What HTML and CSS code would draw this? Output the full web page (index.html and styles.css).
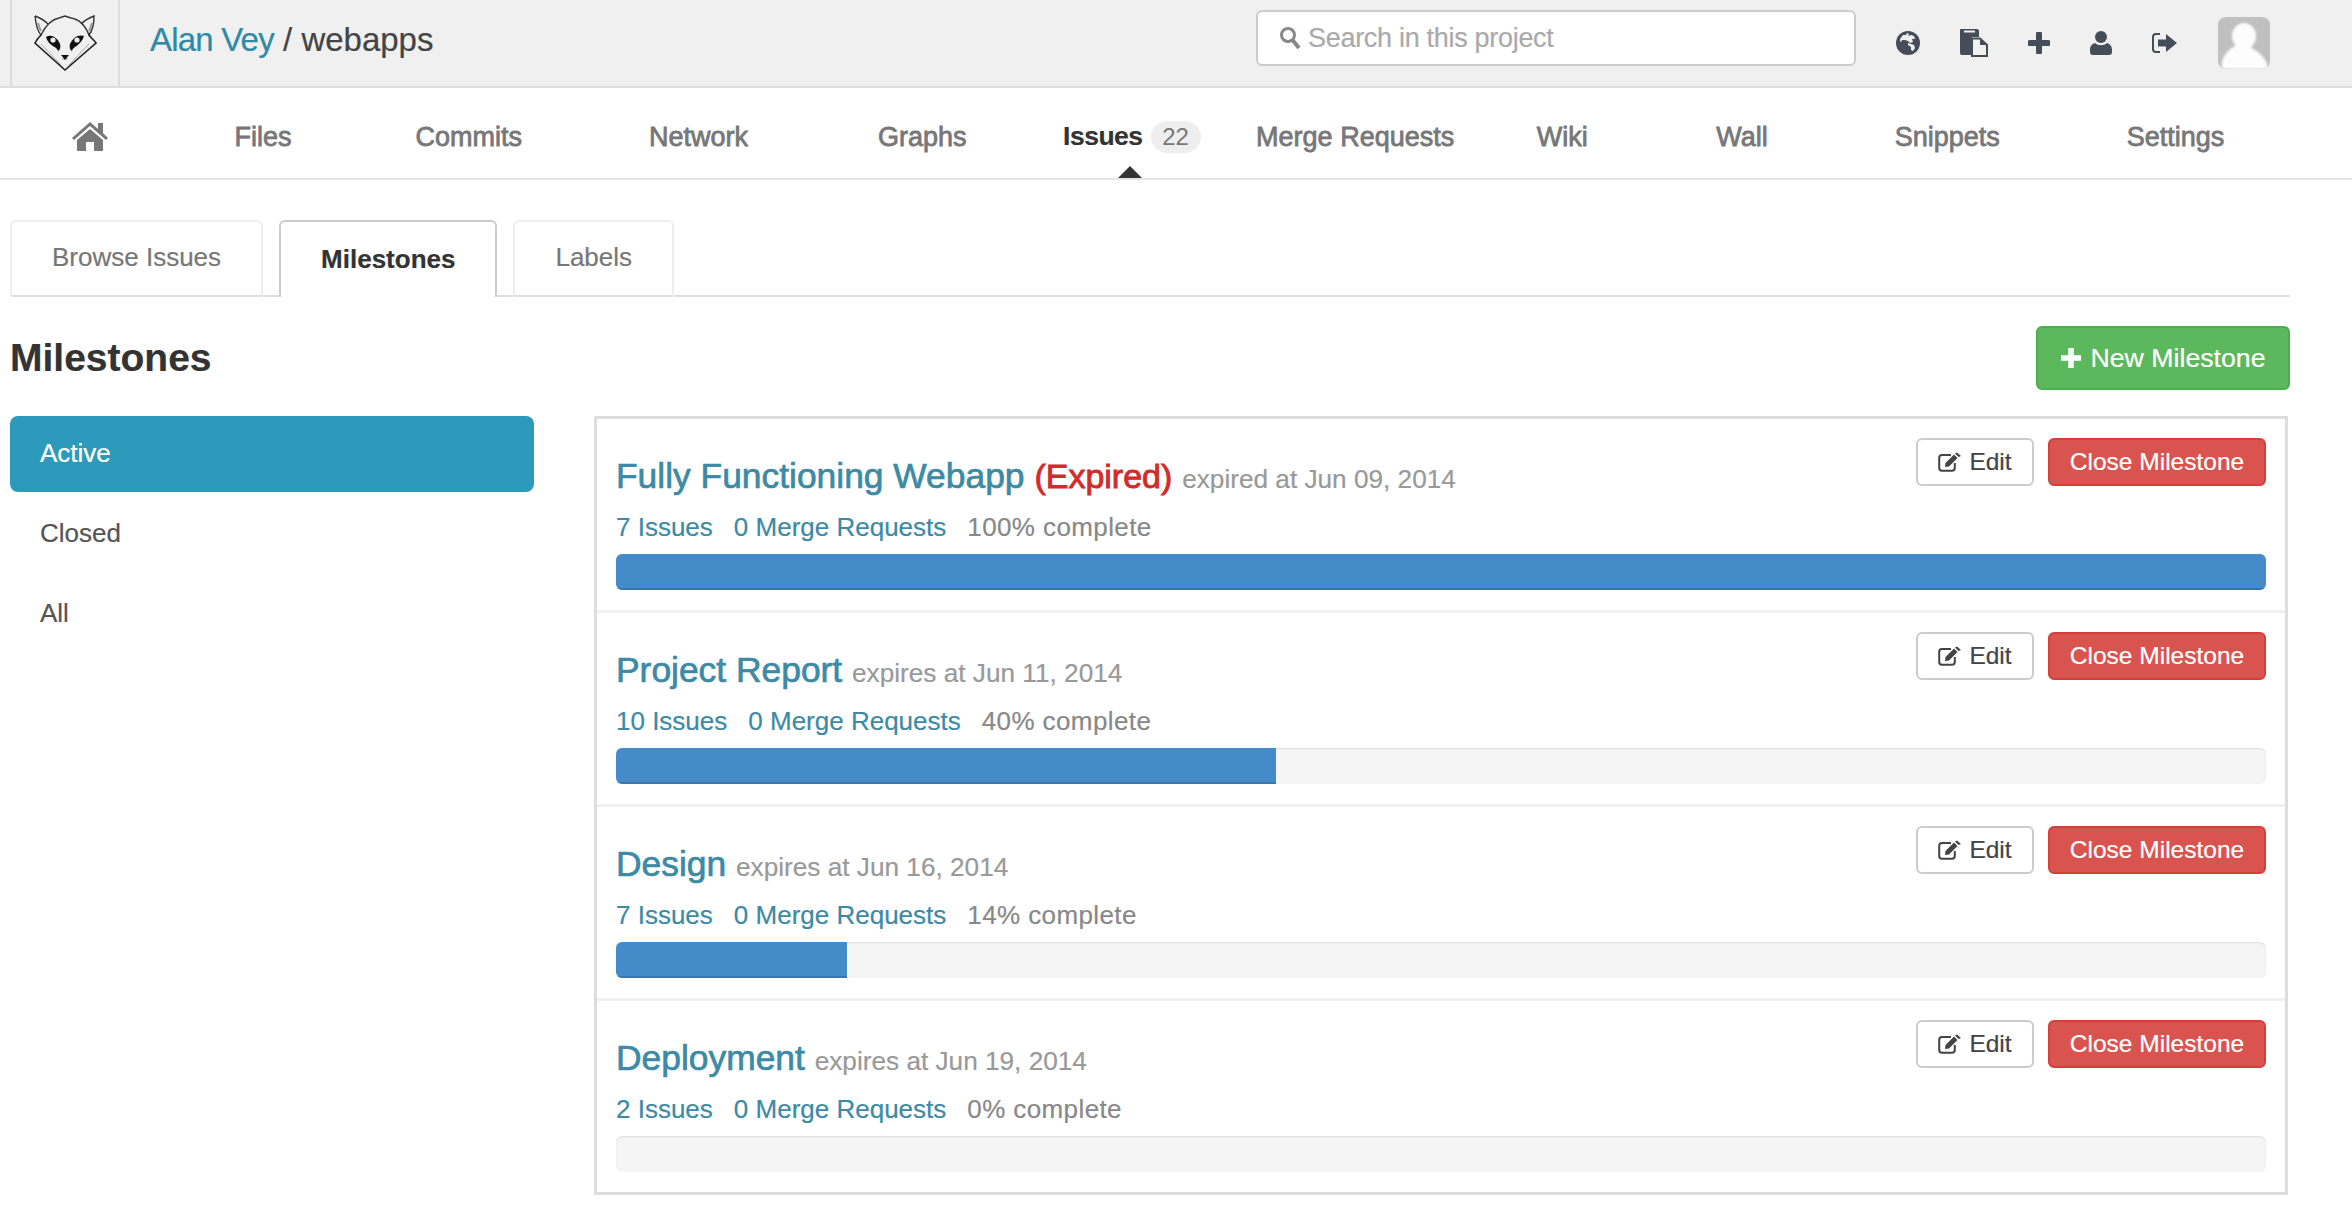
FILE: index.html
```html
<!DOCTYPE html>
<html lang="en">
<head>
    <meta charset="UTF-8">
    <title>Milestones - webapps</title>
    <link rel="stylesheet" href="styles.css">
</head>
<body>

<header class="topbar">
    <a class="logo" href="#">
        <svg width="64" height="60" viewBox="0 0 64 60">
            <path d="M2 3 C3 12 4 18 8 22 C13 12 20 6 26 5 L32 3 L38 5 C45 6 52 12 56 22 C60 17 61 10 61 3 C56 5 51 8 48 11 M2 3 C8 5 12 8 15 11" fill="none" stroke="#333" stroke-width="1.4"/>
            <path d="M8 22 C5 25 3 28 2 30 L32 57 L63 30 C61 27 58 25 56 22" fill="none" stroke="#222" stroke-width="1.6"/>
            <path d="M5 10 C6 14 7 16 8 18 M59 10 C58 14 57 16 56 18" fill="none" stroke="#999" stroke-width="2"/>
            <path d="M8 31 L28 52 M56 31 L36 52 M29 46 L35 46" fill="none" stroke="#aaa" stroke-width="1"/>
            <path d="M13 24 C18 21 24 24 27 31 C28 34 27 37 25 38 C24 33 16 34 13 24 Z" fill="#111"/>
            <path d="M51 23 C46 21 40 24 37 31 C36 34 37 37 39 38 C40 33 48 33 51 23 Z" fill="#111"/>
            <circle cx="20" cy="27" r="2.6" fill="#eee"/>
            <circle cx="44" cy="27" r="2.6" fill="#eee"/>
            <path d="M28 42 L36 42 L32 47 Z" fill="#111"/>
        </svg>
    </a>
    <div class="project-title"><a href="#">Alan Vey</a> / webapps</div>
    <div class="search">
        <svg class="search-icon" width="22" height="24" viewBox="0 0 22 24">
            <circle cx="9" cy="9" r="6.5" fill="none" stroke="#888" stroke-width="3"/>
            <path d="M13.5 14 L20 22" stroke="#888" stroke-width="4"/>
        </svg>
        <input class="search-input" type="text" placeholder="Search in this project">
    </div>
    <div class="top-icons">
        <svg class="icon-globe" width="24" height="24" viewBox="0 0 24 24">
            <circle cx="12" cy="12" r="12" fill="#454d58"/>
            <path d="M4 8 L7 4 L10 4 L11 2 L13 3 L12 5 L15 4 L18 5 L19 8 L16 8 L17 11 L14 12 L12 10 L9 9 L6 9 L5 11 L4 10 Z" fill="#f0f0f0"/>
            <path d="M12 12 L15 13 L18 14 L19 17 L17 20 L15 19 L15 16 L12 14 Z" fill="#f0f0f0"/>
        </svg>
        <svg class="icon-files" width="28" height="28" viewBox="0 0 28 28">
            <path d="M1 0 H17 Q19 0 19 2 V8 H13 Q11 8 11 10 V26 H2 Q0 26 0 24 V1 Q0 0 1 0 Z" fill="#454d58"/>
            <rect x="4" y="1.5" width="11" height="2" fill="#f0f0f0"/>
            <path d="M12 9.5 H20 L27 16 V27 H12 Z" fill="#f0f0f0" stroke="#454d58" stroke-width="2"/>
            <path d="M20 9 V16 H27 Z" fill="#454d58"/>
        </svg>
        <svg class="icon-plus" width="22" height="22" viewBox="0 0 22 22">
            <path d="M11 2 V20 M2 11 H20" stroke="#454d58" stroke-width="6" stroke-linecap="round"/>
        </svg>
        <svg class="icon-user" width="22" height="24" viewBox="0 0 22 24">
            <circle cx="11" cy="6" r="6" fill="#454d58"/>
            <path d="M5 12 C8 15 14 15 17 12 C20 13 22 15 22 19 V21 Q22 24 19 24 H3 Q0 24 0 21 V19 C0 15 2 13 5 12 Z" fill="#454d58"/>
        </svg>
        <svg class="icon-signout" width="25" height="20" viewBox="0 0 25 20">
            <path d="M8 1 H4 Q1 1 1 4 V16 Q1 19 4 19 H8" fill="none" stroke="#454d58" stroke-width="2"/>
            <path d="M6 6.5 H14 V1 L25 10 L14 19 V13.5 H6 Z" fill="#454d58"/>
        </svg>
        <div class="avatar">
            <svg width="52" height="52" viewBox="0 0 52 52">
                <defs><filter id="soft"><feGaussianBlur stdDeviation="0.8"/></filter></defs>
                <g fill="#fdfdfd" filter="url(#soft)">
                    <ellipse cx="26" cy="19" rx="12" ry="13"/>
                    <path d="M20 28 H32 C36 34 49 36 51 52 H7 C3 52 3 36 20 28 Z" transform="translate(-1 0)"/>
                </g>
            </svg>
        </div>
    </div>
</header>

<nav class="mainnav">
    <a class="nav-item nav-home" href="#">
        <svg width="36" height="30" viewBox="0 0 36 30">
            <path d="M18 1 L26 8 V2 H31 V12 L36 17 L34 19 L18 5 L2 19 L0 17 Z" fill="#777"/>
            <path d="M18 8 L31 19 V30 H22 V21 H14 V30 H5 V19 Z" fill="#777"/>
        </svg>
    </a>
    <a class="nav-item nav-files" href="#">Files</a>
    <a class="nav-item" href="#">Commits</a>
    <a class="nav-item" href="#">Network</a>
    <a class="nav-item nav-graphs" href="#">Graphs</a>
    <a class="nav-item nav-issues active" href="#">Issues<span class="badge">22</span></a>
    <a class="nav-item nav-merge" href="#">Merge Requests</a>
    <a class="nav-item nav-wiki" href="#">Wiki</a>
    <a class="nav-item" href="#">Wall</a>
    <a class="nav-item" href="#">Snippets</a>
    <a class="nav-item" href="#">Settings</a>
</nav>

<div class="container">
    <ul class="tabs">
        <li class="tab"><a href="#">Browse Issues</a></li>
        <li class="tab active"><a href="#">Milestones</a></li>
        <li class="tab"><a href="#">Labels</a></li>
    </ul>

    <div class="page-head">
        <h3 class="page-title">Milestones</h3>
        <a class="btn btn-new" href="#">
            <svg width="22" height="22" viewBox="0 0 22 22"><path d="M11 1 V21 M1 11 H21" stroke="#fff" stroke-width="5.5"/></svg>
            New Milestone
        </a>
    </div>

    <div class="columns">
        <ul class="side-nav">
            <li class="side-item active"><a href="#">Active</a></li>
            <li class="side-item"><a href="#">Closed</a></li>
            <li class="side-item"><a href="#">All</a></li>
        </ul>

        <div class="milestones">
            <div class="milestone">
                <div class="milestone-actions">
                    <a class="btn btn-edit" href="#"><svg width="24" height="20" viewBox="0 0 24 20"><use href="#edit-icon"/></svg>Edit</a>
                    <a class="btn btn-close" href="#">Close Milestone</a>
                </div>
                <h4 class="milestone-title"><a href="#">Fully Functioning Webapp</a> <span class="expired">(Expired)</span> <small>expired at Jun 09, 2014</small></h4>
                <p class="milestone-meta"><a href="#">7 Issues</a><a href="#">0 Merge Requests</a><span>100% complete</span></p>
                <div class="progress"><div class="progress-bar" style="width: 100%"></div></div>
            </div>
            <div class="milestone">
                <div class="milestone-actions">
                    <a class="btn btn-edit" href="#"><svg width="24" height="20" viewBox="0 0 24 20"><use href="#edit-icon"/></svg>Edit</a>
                    <a class="btn btn-close" href="#">Close Milestone</a>
                </div>
                <h4 class="milestone-title"><a href="#">Project Report</a> <small>expires at Jun 11, 2014</small></h4>
                <p class="milestone-meta"><a href="#">10 Issues</a><a href="#">0 Merge Requests</a><span>40% complete</span></p>
                <div class="progress"><div class="progress-bar" style="width: 40%"></div></div>
            </div>
            <div class="milestone">
                <div class="milestone-actions">
                    <a class="btn btn-edit" href="#"><svg width="24" height="20" viewBox="0 0 24 20"><use href="#edit-icon"/></svg>Edit</a>
                    <a class="btn btn-close" href="#">Close Milestone</a>
                </div>
                <h4 class="milestone-title"><a href="#">Design</a> <small>expires at Jun 16, 2014</small></h4>
                <p class="milestone-meta"><a href="#">7 Issues</a><a href="#">0 Merge Requests</a><span>14% complete</span></p>
                <div class="progress"><div class="progress-bar" style="width: 14%"></div></div>
            </div>
            <div class="milestone">
                <div class="milestone-actions">
                    <a class="btn btn-edit" href="#"><svg width="24" height="20" viewBox="0 0 24 20"><use href="#edit-icon"/></svg>Edit</a>
                    <a class="btn btn-close" href="#">Close Milestone</a>
                </div>
                <h4 class="milestone-title"><a href="#">Deployment</a> <small>expires at Jun 19, 2014</small></h4>
                <p class="milestone-meta"><a href="#">2 Issues</a><a href="#">0 Merge Requests</a><span>0% complete</span></p>
                <div class="progress"></div>
            </div>
        </div>
    </div>
</div>

<svg class="sprites" width="0" height="0">
    <symbol id="edit-icon" viewBox="0 0 24 20">
        <path d="M13 3 H4 Q1.2 3 1.2 6 V16 Q1.2 18.8 4 18.8 H14 Q16.8 18.8 16.8 16 V11" fill="none" stroke="#444" stroke-width="2"/>
        <path d="M7 15 L7.5 11 L16 2.5 L19.5 6 L11 14.5 Z M17 1.5 L19 0.5 L23 4 L20.5 5 Z" fill="#444"/>
    </symbol>
</svg>

</body>
</html>
```

FILE: styles.css
```css
body {
    font-family: "Liberation Sans", Arial, sans-serif;
    font-size: 26px;
    color: #333;
    background-color: #fff;
    -webkit-text-stroke-width: 0.2px;
    margin: 0;
    padding: 0;
}
a {
    text-decoration: none;
    color: #3c8aa6;
}

/* top bar */
.topbar {
    display: flex;
    align-items: center;
    height: 86px;
    background-color: #f0f0f0;
    border-bottom: 2px solid #dedede;
    padding-left: 10px;
}
.logo {
    display: flex;
    align-items: center;
    justify-content: center;
    box-sizing: border-box;
    width: 110px;
    height: 86px;
    border-left: 2px solid #ddd;
    border-right: 2px solid #ddd;
}
.project-title {
    margin-left: 30px;
    margin-top: -6px;
    font-size: 33px;
    color: #444;
}
.project-title a {
    letter-spacing: -0.8px;
    color: #2f8aa8;
}
.search {
    display: flex;
    align-items: center;
    box-sizing: border-box;
    width: 600px;
    height: 56px;
    margin-left: auto;
    margin-top: -10px;
    padding-left: 21px;
    background-color: #fff;
    border: 2px solid #ccc;
    border-radius: 6px;
}
.search-input {
    flex: 1;
    border: none;
    outline: none;
    padding: 0;
    margin-left: 7px;
    font-family: inherit;
    font-size: 27px;
    letter-spacing: -0.3px;
    background: none;
}
.search-input::placeholder {
    color: #aaa;
    opacity: 1;
}
.top-icons {
    display: flex;
    align-items: center;
    margin-left: 40px;
    margin-right: 82px;
}
.icon-files {
    margin-left: 40px;
}
.icon-plus {
    margin-left: 40px;
}
.icon-user {
    margin-left: 40px;
}
.icon-signout {
    margin-left: 40px;
}
.avatar {
    width: 52px;
    height: 52px;
    margin-left: 41px;
    overflow: hidden;
    background-color: #c0c0c0;
    border-radius: 8px;
}
.avatar svg {
    display: block;
}

/* main nav */
.mainnav {
    display: flex;
    align-items: center;
    height: 90px;
    border-bottom: 2px solid #e5e5e5;
}
.nav-item {
    position: relative;
    top: 4px;
    padding: 0 63.5px;
    color: #777;
    font-size: 27px;
    -webkit-text-stroke-width: 0.8px;
    white-space: nowrap;
}
.nav-home {
    padding: 0 63px 0 72px;
    margin-top: 4px;
}
.nav-files {
    padding-right: 60.5px;
}
.nav-graphs {
    padding-left: 66.5px;
}
.nav-issues {
    padding: 0 27px 0 33px;
}
.nav-merge {
    padding: 0 28.5px;
}
.nav-wiki {
    padding: 0 65px 0 54px;
}
.nav-item.active {
    color: #333;
    font-weight: bold;
    font-size: 26.5px;
    letter-spacing: -0.5px;
    -webkit-text-stroke-width: 0.2px;
}
.nav-item.active::after {
    content: "";
    position: absolute;
    left: 88px;
    top: 45px;
    border-left: 12px solid transparent;
    border-right: 12px solid transparent;
    border-bottom: 12px solid #333;
}
.badge {
    display: inline-block;
    box-sizing: border-box;
    width: 50px;
    margin-left: 8px;
    font-size: 24px;
    line-height: 32px;
    font-weight: normal;
    letter-spacing: 0;
    text-align: center;
    color: #777;
    background-color: #eee;
    border-radius: 16px;
    -webkit-text-stroke-width: 0;
}

/* page */
.container {
    margin: 0 62px 0 10px;
}
.tabs {
    display: flex;
    gap: 16px;
    list-style: none;
    margin: 40px 0 0;
    padding: 0;
    height: 75px;
    border-bottom: 2px solid #ddd;
}
.tab {
    box-sizing: border-box;
    height: 77px;
    padding: 0 40px;
    border: 2px solid #eee;
    border-bottom: none;
    border-radius: 6px 6px 0 0;
}
.tab a {
    color: #777;
    line-height: 70px;
}
.tab.active {
    background-color: #fff;
    border-color: #ccc;
}
.tab.active a {
    color: #333;
    font-weight: bold;
    line-height: 74px;
}
.page-head {
    display: flex;
    align-items: center;
    justify-content: space-between;
    margin-top: 29px;
}
.page-title {
    margin: 0;
    font-size: 39px;
    color: #333;
}
.btn {
    display: inline-flex;
    align-items: center;
    justify-content: center;
    box-sizing: border-box;
    border-radius: 6px;
}
.btn-new {
    gap: 8px;
    width: 254px;
    height: 64px;
    font-size: 26.7px;
    color: #fff;
    background-color: #5cb85c;
    border: 2px solid #4cae4c;
}
.columns {
    display: flex;
    align-items: flex-start;
    margin-top: 26px;
}
.side-nav {
    width: 524px;
    list-style: none;
    margin: 0 60px 0 0;
    padding: 0;
}
.side-item {
    margin-bottom: 4px;
}
.side-item a {
    display: block;
    padding: 0 30px;
    line-height: 75px;
    height: 76px;
    color: #555;
    border-radius: 8px;
}
.side-item.active a {
    color: #fff;
    background-color: #2d9abc;
}

/* milestones */
.milestones {
    box-sizing: border-box;
    flex: 1;
    margin-right: 2px;
    border: 3px solid #ddd;
}
.milestone {
    position: relative;
    box-sizing: border-box;
    height: 194px;
    padding: 0 19px;
    border-bottom: 3px solid #f0f0f0;
}
.milestone:last-child {
    height: 191px;
    border-bottom: none;
}
.milestone-actions {
    position: absolute;
    top: 19px;
    right: 19px;
    display: flex;
    gap: 14px;
}
.btn-edit {
    gap: 7px;
    width: 118px;
    height: 48px;
    font-size: 24.5px;
    color: #444;
    background-color: #fff;
    border: 2px solid #ccc;
}
.btn-close {
    width: 218px;
    height: 48px;
    font-size: 24.5px;
    color: #fff;
    background-color: #d9534f;
    border: 2px solid #d43f3a;
}
.milestone-title {
    margin: 0;
    padding-top: 35px;
    font-size: 35.4px;
    font-weight: normal;
    line-height: 44px;
    -webkit-text-stroke-width: 0.7px;
    color: #3c8aa6;
}
.milestone-title small {
    font-size: 26.2px;
    color: #999;
    -webkit-text-stroke-width: 0.2px;
}
.expired {
    font-size: 34px;
    color: #d22b2b;
    -webkit-text-stroke-width: 0.9px;
}
.milestone-meta {
    display: flex;
    gap: 21px;
    margin: 8px 0 0;
    line-height: 36px;
    color: #888;
}
.milestone-meta span {
    letter-spacing: 0.4px;
}
.progress {
    height: 36px;
    margin-top: 9px;
    overflow: hidden;
    background-color: #f5f5f5;
    border-radius: 6px;
    box-shadow: inset 0 1px 2px rgba(0, 0, 0, 0.1);
}
.progress-bar {
    height: 100%;
    background-color: #458bc9;
    box-shadow: inset 0 -2px 0 rgba(0, 0, 0, 0.15);
}
.sprites {
    position: absolute;
}
```
